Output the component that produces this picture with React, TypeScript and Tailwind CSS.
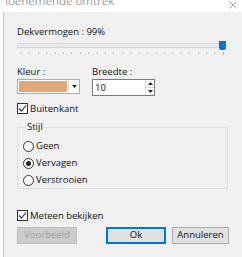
import React from "react";

const font = { fontFamily: '"Open Sans", "Noto Sans", sans-serif' };

function Check({ label }: { label: string }) {
  return (
    <div className="flex items-center h-[13px]">
      <div className="w-[11px] h-[11px] border border-[#333] bg-white flex items-center justify-center">
        <svg width="9" height="9" viewBox="0 0 9 9">
          <path d="M1 4.5 L3.5 7 L8 1.5" fill="none" stroke="#222" strokeWidth="1.1" />
        </svg>
      </div>
      <span className="ml-[2px] text-[9.5px] leading-none text-[#111]">{label}</span>
    </div>
  );
}

function Radio({ label, on }: { label: string; on?: boolean }) {
  return (
    <div className="flex items-center h-[12px]">
      <div className="w-[11px] h-[11px] rounded-full border border-[#333] bg-white flex items-center justify-center">
        {on && <div className="w-[5px] h-[5px] rounded-full bg-[#222]" />}
      </div>
      <span className="ml-[2px] text-[9.5px] leading-none text-[#111]">{label}</span>
    </div>
  );
}

export default function App() {
  const ticks = Array.from({ length: 25 });
  return (
    <div className="w-[242px] h-[257px] bg-white overflow-hidden relative" style={font}>
      <div className="h-[12px] relative">
        <span className="absolute left-[5px] top-[-6px] text-[11.5px] leading-[13px] text-[#9a9a9a]">loenemende omtrek</span>
        <svg className="absolute left-[229px] top-[1px]" width="8" height="8" viewBox="0 0 8 8">
          <path d="M0.5 0.5 L7.5 7.5 M7.5 0.5 L0.5 7.5" stroke="#999" strokeWidth="0.9" />
        </svg>
      </div>
      <div className="ml-[3px] h-[245px] border-l border-[#c4c4c4] bg-[#f0f0f0] pl-[13px] pr-[13px] flex flex-col">
        <div className="mt-[14px] h-[12px] text-[9.5px] leading-[12px] text-[#111]">Dekvermogen : 99%</div>
        <div className="mt-[2px] relative h-[11px] w-[210px]">
          <div className="absolute left-0 top-[3px] w-[206px] h-[5px] bg-[#e7eaea] border border-[#d6d6d6]" />
          <div className="absolute left-[202px] top-[1px] w-[7px] h-[9px] bg-[#0078d7] rounded-b-[2px]" />
        </div>
        <div className="mt-[1px] ml-[4px] w-[203px] h-[3px] flex justify-between">
          {ticks.map((_, i) => (
            <div key={i} className={i === 24 ? "w-[1px] h-[3px] bg-[#b0b0b0]" : "w-[1px] h-[2px] bg-[#c4c4c4]"} />
          ))}
        </div>
        <div className="mt-[11px] flex">
          <div className="flex flex-col">
            <div className="h-[12px] text-[9.5px] leading-[12px] text-[#111]">Kleur :</div>
            <div className="mt-[1px] w-[63px] h-[15px] border border-[#adadad] bg-white flex">
              <div className="flex-1 m-[1px] bg-[#e0a97b]" />
              <div className="w-[11px] border-l border-[#dcdcdc] flex items-center justify-center">
                <svg width="5" height="3" viewBox="0 0 5 3"><path d="M0 0 L5 0 L2.5 3 Z" fill="#222" /></svg>
              </div>
            </div>
          </div>
          <div className="ml-[12px] flex flex-col">
            <div className="h-[12px] text-[9.5px] leading-[12px] text-[#111]">Breedte :</div>
            <div className="mt-[1px] w-[63px] h-[17px] border border-[#7a7a7a] bg-white flex">
              <div className="flex-1 pl-[2px] text-[9.5px] leading-[15px] text-[#111]">10</div>
              <div className="w-[9px] border-l border-[#dcdcdc] flex flex-col">
                <div className="flex-1 border-b border-[#dcdcdc] flex items-center justify-center">
                  <svg width="5" height="3" viewBox="0 0 5 3"><path d="M0 3 L5 3 L2.5 0 Z" fill="#222" /></svg>
                </div>
                <div className="flex-1 flex items-center justify-center">
                  <svg width="5" height="3" viewBox="0 0 5 3"><path d="M0 0 L5 0 L2.5 3 Z" fill="#222" /></svg>
                </div>
              </div>
            </div>
          </div>
        </div>
        <div className="mt-[6px]">
          <Check label="Buitenkant" />
        </div>
        <div className="mt-[12px] relative w-[211px] h-[62px] border border-[#dcdcdc]">
          <span className="absolute left-[8px] top-[-7px] px-[1px] bg-[#f0f0f0] text-[9.5px] leading-[12px] text-[#111]">Stijl</span>
          <div className="pl-[5px] pt-[12px] flex flex-col gap-[5px]">
            <Radio label="Geen" />
            <Radio label="Vervagen" on />
            <Radio label="Verstrooien" />
          </div>
        </div>
        <div className="mt-[20px]">
          <Check label="Meteen bekijken" />
        </div>
        <div className="mt-[5px] flex">
          <div className="w-[60px] h-[17px] bg-[#cccccc] border border-[#bfbfbf] flex items-center justify-center text-[9.5px] text-[#a0a0a0]">Voorbeeld</div>
          <div className="ml-[29px] w-[60px] h-[17px] bg-[#e1e1e1] border-2 border-[#0078d7] flex items-center justify-center text-[9.5px] text-[#111]">Ok</div>
          <div className="ml-[6px] w-[57px] h-[17px] bg-[#e1e1e1] border border-[#adadad] flex items-center justify-center text-[9.5px] text-[#111]">Annuleren</div>
        </div>
      </div>
    </div>
  );
}
